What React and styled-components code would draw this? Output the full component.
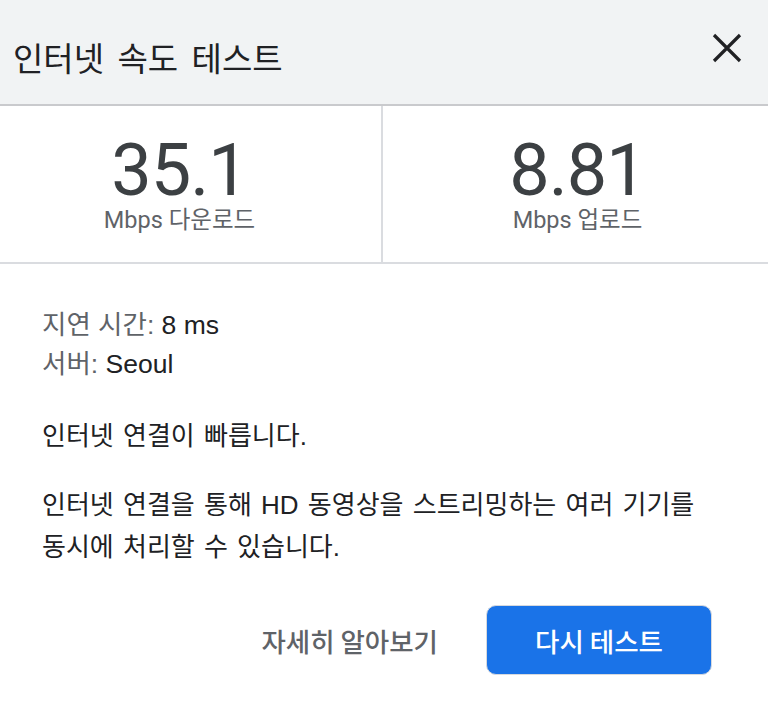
import React from "react";
import styled, { createGlobalStyle } from "styled-components";

const Global = createGlobalStyle`
  html, body { margin: 0; padding: 0; background: #ffffff; }
  body { font-family: "Liberation Sans", "Noto Sans CJK KR", sans-serif; color: #202124; }
  * { box-sizing: border-box; }
`;

const Dialog = styled.div`
  width: 768px;
  height: 710px;
  background: #ffffff;
  display: flex;
  flex-direction: column;
`;

const Header = styled.header`
  height: 106px;
  flex: none;
  background: #f1f3f4;
  border-bottom: 2px solid #c9cacd;
  display: flex;
  align-items: center;
  justify-content: space-between;
  padding: 0 26px 0 13px;
`;

const Title = styled.h1`
  margin: 10px 0 0 0;
  font-family: "Noto Sans CJK KR", sans-serif;
  font-size: 33px;
  line-height: 40px;
  font-weight: 400;
  word-spacing: 6px;
  color: #202124;
`;

const CloseButton = styled.button`
  border: 0;
  background: transparent;
  padding: 0;
  margin-bottom: 8px;
  width: 30px;
  height: 30px;
  display: flex;
  cursor: pointer;
  color: #202124;
`;

const Stats = styled.section`
  height: 158px;
  flex: none;
  display: grid;
  grid-template-columns: 381px 1fr;
  border-bottom: 2px solid #dadce0;
`;

const Stat = styled.div`
  display: flex;
  flex-direction: column;
  align-items: center;
  justify-content: center;
  padding: ${(p) => (p.$left ? "0 22px 0 0" : "0 0 0 4px")};
  border-left: ${(p) => (p.$left ? "none" : "2px solid #dadce0")};
`;

const Value = styled.div`
  font-family: Roboto, sans-serif;
  font-size: 72px;
  line-height: 72px;
  color: #3c4043;
  letter-spacing: -1px;
`;

const Unit = styled.div`
  font-family: Roboto, "Noto Sans CJK KR", sans-serif;
  font-size: 23.5px;
  line-height: 26px;
  color: #5f6368;
`;

const Body = styled.section`
  flex: 1;
  display: flex;
  flex-direction: column;
  padding: 42px 56px 0 42px;
`;

const Info = styled.div`
  font-size: 26.5px;
  line-height: 39px;
`;

const Label = styled.span`
  color: #5f6368;
`;

const Text = styled.p`
  margin: ${(p) => p.$margin || "0"};
  font-size: 26px;
  line-height: 42px;
  color: #202124;
  word-spacing: 2px;
`;

const Actions = styled.div`
  display: flex;
  justify-content: flex-end;
  align-items: center;
  gap: 30px;
  margin-top: 37px;
`;

const LinkButton = styled.button`
  border: 0;
  background: transparent;
  font-family: "Noto Sans CJK KR", sans-serif;
  font-size: 26.5px;
  font-weight: 500;
  color: #5f6368;
  padding: 0 18px;
  height: 70px;
  cursor: pointer;
`;

const PrimaryButton = styled.button`
  width: 226px;
  height: 70px;
  border-radius: 10px;
  border: 1px solid #d6d9de;
  background: #1a73e8;
  color: #ffffff;
  font-family: "Noto Sans CJK KR", sans-serif;
  font-size: 26.5px;
  font-weight: 500;
  cursor: pointer;
`;

export default function App() {
  return (
    <>
      <Global />
      <Dialog>
        <Header>
          <Title>인터넷 속도 테스트</Title>
          <CloseButton aria-label="닫기">
            <svg width="30" height="30" viewBox="0 0 30 30">
              <path d="M2 2 L28 28 M28 2 L2 28" stroke="currentColor" strokeWidth="3.2" strokeLinecap="butt" />
            </svg>
          </CloseButton>
        </Header>
        <Stats>
          <Stat $left>
            <Value>35.1</Value>
            <Unit>Mbps 다운로드</Unit>
          </Stat>
          <Stat>
            <Value>8.81</Value>
            <Unit>Mbps 업로드</Unit>
          </Stat>
        </Stats>
        <Body>
          <Info>
            <div><Label>지연 시간:</Label> 8 ms</div>
            <div><Label>서버:</Label> Seoul</div>
          </Info>
          <Text $margin="31px 0 0 0">인터넷 연결이 빠릅니다.</Text>
          <Text $margin="27px 0 0 0">
            인터넷 연결을 통해 HD 동영상을 스트리밍하는 여러 기기를<br />
            동시에 처리할 수 있습니다.
          </Text>
          <Actions>
            <LinkButton>자세히 알아보기</LinkButton>
            <PrimaryButton>다시 테스트</PrimaryButton>
          </Actions>
        </Body>
      </Dialog>
    </>
  );
}
